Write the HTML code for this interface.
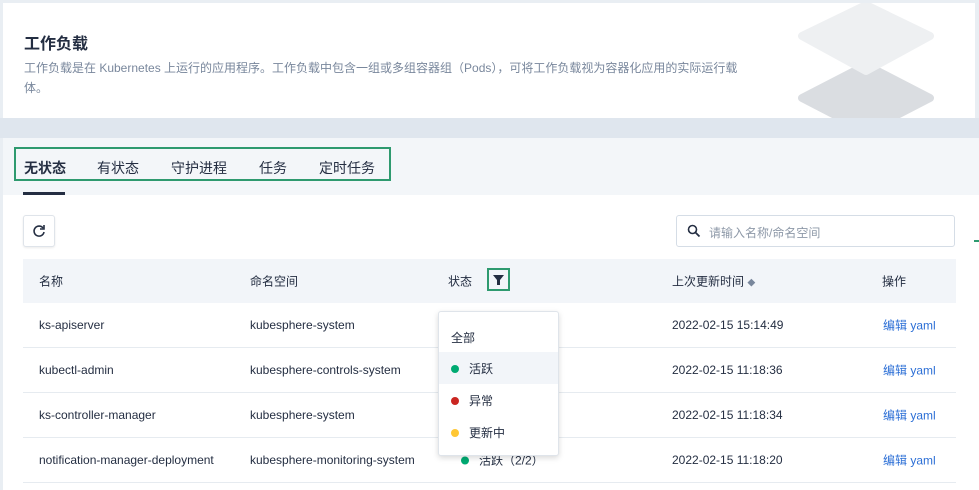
<!DOCTYPE html><html><head><meta charset="utf-8"><style>
*{box-sizing:border-box;margin:0;padding:0}
body{width:979px;height:490px;overflow:hidden;background:#e9eef3;font-family:"Liberation Sans","Noto Sans CJK SC",sans-serif;color:#242e42;position:relative}
.a{position:absolute}
.hdr{left:3px;top:3px;width:972px;height:115px;background:#fff;overflow:hidden}
.band{left:0;top:118px;width:979px;height:20px;background:#dfe6ee}
.tabs{left:3px;top:138px;width:976px;height:57px;background:#f3f6f9}
.main{left:3px;top:195px;width:976px;height:295px;background:#fff}
.th{left:23px;top:259px;width:933px;height:44px;background:#f2f5f9;font-size:12px}
.row{left:23px;width:933px;height:45px;border-bottom:1px solid #e6ebf0;font-size:12px}
.row span,.th span{position:absolute;top:50%;transform:translateY(-50%);white-space:nowrap}
.dot{display:inline-block;width:8px;height:8px;border-radius:50%;margin-right:10px;vertical-align:0}
</style></head><body>
<div class="a hdr">
 <div class="a" style="left:21px;top:27px;font-size:16px;font-weight:bold">工作负载</div>
 <div class="a" style="left:21px;top:55px;font-size:12px;color:#79879c;line-height:20px;width:730px">工作负载是在 Kubernetes 上运行的应用程序。工作负载中包含一组或多组容器组（Pods），可将工作负载视为容器化应用的实际运行载体。</div>
 <svg class="a" style="left:0;top:0" width="972" height="115"><polygon points="863,62 927,95 863,128 799,95" fill="#dadde1" stroke="#dadde1" stroke-width="8" stroke-linejoin="round"/><polygon points="863,2 927,33 863,68 799,33" fill="#eef0f2" stroke="#eef0f2" stroke-width="8" stroke-linejoin="round"/></svg>
</div>
<div class="a band"></div>
<div class="a tabs"></div>
<div class="a" style="left:14px;top:147px;width:377px;height:34px;border:2px solid #2e9a6f"></div>
<div class="a" style="top:158px;left:24px;font-size:14px;font-weight:bold">无状态</div>
<div class="a" style="top:158px;left:97px;font-size:14px">有状态</div>
<div class="a" style="top:158px;left:171px;font-size:14px">守护进程</div>
<div class="a" style="top:158px;left:259px;font-size:14px">任务</div>
<div class="a" style="top:158px;left:319px;font-size:14px">定时任务</div>
<div class="a" style="left:23px;top:192px;width:42px;height:4px;background:#242e42"></div>
<div class="a main"></div>
<div class="a" style="left:23px;top:215px;width:32px;height:32px;border:1px solid #dfe4ea;border-radius:3px;background:#fff;box-shadow:0 1px 2px rgba(0,0,0,.08)">
<svg width="30" height="30" viewBox="0 0 30 30" style="position:absolute;left:0;top:0"><path d="M19 12a5 5 0 1 0 1 4" fill="none" stroke="#242e42" stroke-width="1.6"/><path d="M20 9v4h-4" fill="none" stroke="#242e42" stroke-width="1.6"/></svg></div>
<div class="a" style="left:676px;top:215px;width:279px;height:32px;border:1px solid #d5dde6;border-radius:3px;background:#fff">
<svg class="a" style="left:10px;top:8px" width="14" height="14" viewBox="0 0 14 14"><circle cx="5.5" cy="5.5" r="4" fill="none" stroke="#242e42" stroke-width="1.6"/><path d="M8.5 8.5L12.5 12.5" stroke="#242e42" stroke-width="1.8"/></svg>
<div class="a" style="left:32px;top:8px;font-size:12px;color:#8e99a8">请输入名称/命名空间</div></div>
<div class="a" style="left:974px;top:240px;width:5px;height:2px;background:#2e9a6f"></div>
<div class="a th"><span style="left:16px">名称</span><span style="left:227px">命名空间</span><span style="left:425px">状态</span><span style="left:649px">上次更新时间 <span style="position:static;font-size:8px;color:#79879c">◆</span></span><span style="left:859px">操作</span></div>
<div class="a" style="left:487px;top:268px;width:23px;height:23px;border:2px solid #2e9a6f"><svg width="19" height="19" viewBox="0 0 19 19"><path d="M4 5h11l-4 5v5h-3v-5z" fill="#242e42"/></svg></div>
<div class="a row" style="top:303px"><span style="left:16px">ks-apiserver</span><span style="left:227px">kubesphere-system</span><span style="left:649px">2022-02-15 15:14:49</span><span style="left:860px;color:#2c6fd6">编辑 yaml</span></div>
<div class="a row" style="top:348px"><span style="left:16px">kubectl-admin</span><span style="left:227px">kubesphere-controls-system</span><span style="left:649px">2022-02-15 11:18:36</span><span style="left:860px;color:#2c6fd6">编辑 yaml</span></div>
<div class="a row" style="top:393px"><span style="left:16px">ks-controller-manager</span><span style="left:227px">kubesphere-system</span><span style="left:649px">2022-02-15 11:18:34</span><span style="left:860px;color:#2c6fd6">编辑 yaml</span></div>
<div class="a row" style="top:438px"><span style="left:16px">notification-manager-deployment</span><span style="left:227px">kubesphere-monitoring-system</span><span style="left:438px"><i class="dot" style="background:#00aa72"></i>活跃（2/2）</span><span style="left:649px">2022-02-15 11:18:20</span><span style="left:860px;color:#2c6fd6">编辑 yaml</span></div>
<div class="a" style="left:438px;top:311px;width:121px;height:145px;background:#fff;border:1px solid #dfe4ea;border-radius:3px;box-shadow:0 2px 6px rgba(0,0,0,.15);font-size:12px">
<div class="a" style="left:12px;top:17px">全部</div>
<div class="a" style="left:0;top:40px;width:119px;height:32px;background:#f2f5f9"></div>
<div class="a" style="left:12px;top:48px"><i class="dot" style="background:#00aa72"></i>活跃</div>
<div class="a" style="left:12px;top:80px"><i class="dot" style="background:#ca2621"></i>异常</div>
<div class="a" style="left:12px;top:112px"><i class="dot" style="background:#ffc734"></i>更新中</div>
</div>
</body></html>
